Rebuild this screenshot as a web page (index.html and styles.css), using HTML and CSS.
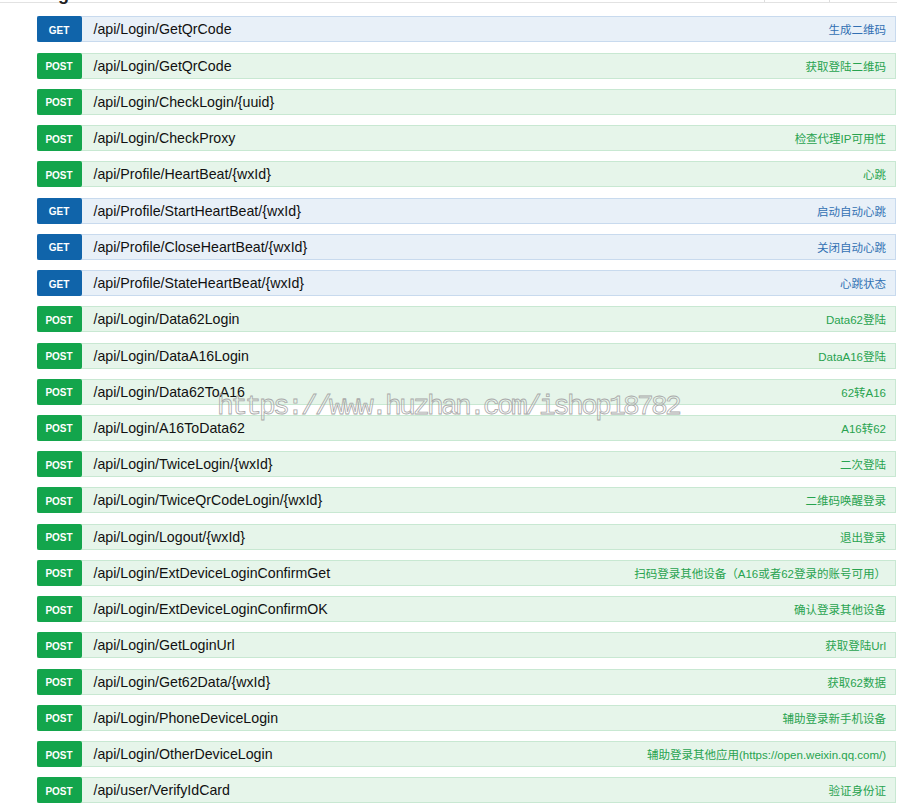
FILE: index.html
```html
<!DOCTYPE html>
<html lang="zh">
<head>
<meta charset="utf-8">
<title>API</title>
<link rel="stylesheet" href="styles.css">
</head>
<body>
<div class="page">
  <div class="res-head">
    <h2 class="res-title">Login</h2>
    <ul class="res-opts">
      <li class="opt-1">显示/隐藏</li>
      <li class="opt-2">列出操作</li>
      <li class="opt-3">展开操作</li>
    </ul>
  </div>
  <ul class="ops">
    <li class="op op-get"><span class="method">GET</span><span class="path">/api/Login/GetQrCode</span><span class="desc">生成二维码</span></li>
    <li class="op op-post"><span class="method">POST</span><span class="path">/api/Login/GetQrCode</span><span class="desc">获取登陆二维码</span></li>
    <li class="op op-post"><span class="method">POST</span><span class="path">/api/Login/CheckLogin/{uuid}</span><span class="desc"></span></li>
    <li class="op op-post"><span class="method">POST</span><span class="path">/api/Login/CheckProxy</span><span class="desc">检查代理IP可用性</span></li>
    <li class="op op-post"><span class="method">POST</span><span class="path">/api/Profile/HeartBeat/{wxId}</span><span class="desc">心跳</span></li>
    <li class="op op-get"><span class="method">GET</span><span class="path">/api/Profile/StartHeartBeat/{wxId}</span><span class="desc">启动自动心跳</span></li>
    <li class="op op-get"><span class="method">GET</span><span class="path">/api/Profile/CloseHeartBeat/{wxId}</span><span class="desc">关闭自动心跳</span></li>
    <li class="op op-get"><span class="method">GET</span><span class="path">/api/Profile/StateHeartBeat/{wxId}</span><span class="desc">心跳状态</span></li>
    <li class="op op-post"><span class="method">POST</span><span class="path">/api/Login/Data62Login</span><span class="desc">Data62登陆</span></li>
    <li class="op op-post"><span class="method">POST</span><span class="path">/api/Login/DataA16Login</span><span class="desc">DataA16登陆</span></li>
    <li class="op op-post"><span class="method">POST</span><span class="path">/api/Login/Data62ToA16</span><span class="desc">62转A16</span></li>
    <li class="op op-post"><span class="method">POST</span><span class="path">/api/Login/A16ToData62</span><span class="desc">A16转62</span></li>
    <li class="op op-post"><span class="method">POST</span><span class="path">/api/Login/TwiceLogin/{wxId}</span><span class="desc">二次登陆</span></li>
    <li class="op op-post"><span class="method">POST</span><span class="path">/api/Login/TwiceQrCodeLogin/{wxId}</span><span class="desc">二维码唤醒登录</span></li>
    <li class="op op-post"><span class="method">POST</span><span class="path">/api/Login/Logout/{wxId}</span><span class="desc">退出登录</span></li>
    <li class="op op-post"><span class="method">POST</span><span class="path">/api/Login/ExtDeviceLoginConfirmGet</span><span class="desc">扫码登录其他设备（A16或者62登录的账号可用）</span></li>
    <li class="op op-post"><span class="method">POST</span><span class="path">/api/Login/ExtDeviceLoginConfirmOK</span><span class="desc">确认登录其他设备</span></li>
    <li class="op op-post"><span class="method">POST</span><span class="path">/api/Login/GetLoginUrl</span><span class="desc">获取登陆Url</span></li>
    <li class="op op-post"><span class="method">POST</span><span class="path">/api/Login/Get62Data/{wxId}</span><span class="desc">获取62数据</span></li>
    <li class="op op-post"><span class="method">POST</span><span class="path">/api/Login/PhoneDeviceLogin</span><span class="desc">辅助登录新手机设备</span></li>
    <li class="op op-post"><span class="method">POST</span><span class="path">/api/Login/OtherDeviceLogin</span><span class="desc">辅助登录其他应用(https://open.weixin.qq.com/)</span></li>
    <li class="op op-post"><span class="method">POST</span><span class="path">/api/user/VerifyIdCard</span><span class="desc">验证身份证</span></li>
  </ul>
  <div class="watermark">https://www.huzhan.com/ishop18782</div>
</div>
</body>
</html>
```

FILE: styles.css
```css
html, body {
  margin: 0;
  padding: 0;
  background: #ffffff;
}

body {
  font-family: "Liberation Sans", Arial, "Noto Sans CJK SC", sans-serif;
  overflow: hidden;
}

.page {
  position: relative;
  display: flow-root;
  width: 900px;
}

.res-head {
  display: flex;
  justify-content: space-between;
  align-items: flex-start;
  box-sizing: border-box;
  width: 897px;
  height: 16px;
  margin-top: -13px;
  padding: 0 14px 0 36px;
  border-bottom: 1px solid #e2e2e2;
}

.res-title {
  margin: 0;
  font-size: 18px;
  font-weight: bold;
  line-height: 15px;
  color: #222222;
}

.res-opts {
  list-style: none;
  display: flex;
  margin: 0;
  padding: 0;
  font-size: 11.5px;
  line-height: 15px;
  color: #8a8a8a;
}

.res-opts li {
  border-right: 1px solid #dddddd;
}

.opt-1 {
  padding: 0 8px 0 0;
}

.opt-2 {
  padding: 0 11px 0 7px;
}

.opt-3 {
  padding: 0 0 0 7px;
}

.res-opts li:last-child {
  border-right: none;
}

.ops {
  list-style: none;
  margin: 13.4px 0 0 36.5px;
  padding: 0;
  width: 859.5px;
}

.op {
  display: flex;
  align-items: center;
  box-sizing: border-box;
  height: 26px;
  margin-bottom: 10.24px;
  border: 1px solid;
}

.method {
  align-self: stretch;
  display: flex;
  align-items: center;
  justify-content: center;
  box-sizing: border-box;
  width: 45px;
  margin: -1px 0 -1px -1px;
  padding-top: 2px;
  border-radius: 2px;
  color: #ffffff;
  font-size: 10px;
  font-weight: bold;
}

.path {
  flex: 1;
  padding-left: 12px;
  font-size: 14.2px;
  color: #111111;
  white-space: nowrap;
}

.desc {
  padding-right: 9px;
  font-size: 11.5px;
  white-space: nowrap;
}

.op-get {
  background: #e8f0f8;
  border-color: #c8daee;
}

.op-get .method {
  background: #1064aa;
}

.op-get .desc {
  color: #3270b3;
}

.op-post {
  background: #e6f5ea;
  border-color: #c8e8d2;
}

.op-post .method {
  background: #13a54c;
}

.op-post .desc {
  color: #28a34f;
}

.watermark {
  position: absolute;
  left: 217px;
  top: 393px;
  font-family: "Liberation Mono", "Courier New", monospace;
  font-size: 28px;
  line-height: 1;
  letter-spacing: -2.8px;
  white-space: nowrap;
  color: transparent;
  -webkit-text-stroke: 0.8px #a9a9a9;
  pointer-events: none;
}
```
